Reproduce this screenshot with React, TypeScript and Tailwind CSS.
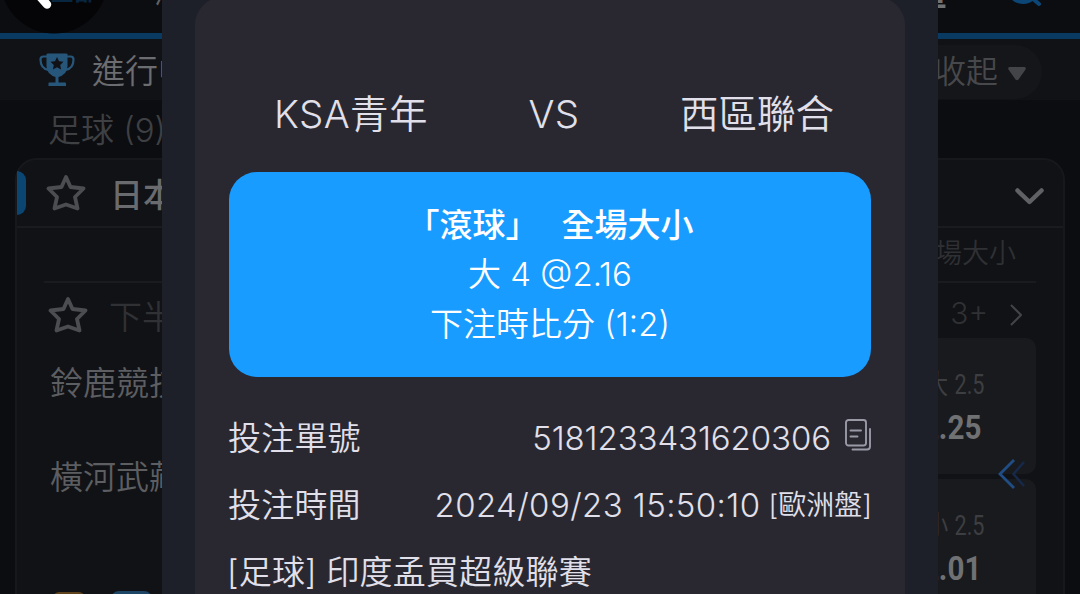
import React from 'react';

interface DetailRowProps {
  label: string;
  children: React.ReactNode;
}

interface OddsBoxProps {
  side: string;
  line: string;
  value: string;
}

const StarIcon: React.FC = () => (
  <svg
    className="h-10 w-10 shrink-0 text-[#4c4d50]"
    viewBox="0 0 40 40"
    fill="none"
    stroke="currentColor"
    strokeWidth="3.8"
    strokeLinejoin="round"
  >
    <path d="M20 4 L24.5 14 L37.5 15.5 L29 24 L31.5 35.5 L20 31.5 L8.5 35.5 L11 24 L2.5 15.5 L15.5 14 Z" />
  </svg>
);

const TrophyIcon: React.FC = () => (
  <svg className="h-[34px] w-9 shrink-0" viewBox="0 0 36 34" fill="none">
    <path
      d="M9 3.5H4.5Q1.5 3.5 1.5 6.5Q1.5 15.5 9.5 17M27 3.5h4.5Q34.5 3.5 34.5 6.5Q34.5 15.5 26.5 17"
      stroke="#27567b"
      strokeWidth="2.2"
    />
    <path d="M7.5 1.5Q7.5 .5 9 .5H27Q28.5 .5 28.5 1.5V13Q28.5 22 18 24.5Q7.5 22 7.5 13Z" fill="#27567b" />
    <path d="M16.5 21h3v9h-3zM10 29.5h16a1 1 0 0 1 1 1v2.5H9.5v-2.5q0-1 .5-1z" fill="#27567b" />
    <path
      d="M18 4l2 4.3 4.5.5-3.3 3.2.9 4.5-4.1-2.2-4.1 2.2.9-4.5-3.3-3.2 4.5-.5z"
      fill="#111216"
    />
  </svg>
);

const CopyIcon: React.FC = () => (
  <svg
    className="h-8 w-[26px] shrink-0"
    viewBox="0 0 26 32"
    fill="none"
    stroke="#9a99a6"
    strokeWidth="1.9"
    strokeLinecap="round"
  >
    <rect x="1" y="1" width="20" height="25.5" rx="2.5" />
    <path d="M5.5 11.5h10.5M5.5 17.5h7M25 10v17.5q0 3-3 3H7.5" />
  </svg>
);

const OddsBox: React.FC<OddsBoxProps> = ({ side, line, value }) => (
  <div className="flex h-[136px] w-[170px] flex-col items-end rounded-[10px] bg-[#191a1d] pt-[31px] pr-[52px]">
    <div className="flex origin-right scale-x-[0.8] gap-2 font-[Roboto,'Noto_Sans_CJK_TC',sans-serif] text-[27px] leading-8 font-normal text-[#3d3e41]">
      <span>{side}</span>
      <span>{line}</span>
    </div>
    <span className="mt-2 mr-[3px] origin-right scale-x-[0.87] font-[Roboto,sans-serif] text-[34px] leading-9 font-bold text-[#707173]">
      {value}
    </span>
  </div>
);

const DetailRow: React.FC<DetailRowProps> = ({ label, children }) => (
  <div className="flex h-[67px] items-center justify-between">
    <span className="-ml-px tracking-[0.2px]">{label}</span>
    <div className="flex items-center">{children}</div>
  </div>
);

const MatchList: React.FC = () => (
  <div className="h-full overflow-hidden bg-[#0c0d11]">
    {/* Top navigation */}
    <div className="relative h-[39px] border-b-[6px] border-[#083a62]">
      <span className="absolute -top-[27px] left-[154px] text-[33px] leading-9 text-[#606164]">滾球</span>
      <span className="absolute -top-[21px] right-[133px] text-[33px] leading-9 font-bold text-[#707173]">注單</span>
      <svg className="absolute top-0 left-0 h-[34px] w-[110px]" viewBox="0 0 110 34">
        <circle cx="54" cy="-20" r="53.5" fill="#050507" />
      </svg>
      <span className="absolute -top-[26px] left-[50px] text-[24px] leading-9 font-bold text-[#08263f]">全部</span>
      <svg className="absolute top-0 left-[30px] h-3 w-6" viewBox="0 0 24 12" fill="none">
        <path d="M6 -8L17 4.5" stroke="#fff" strokeWidth="8.5" strokeLinecap="round" />
      </svg>
      <svg className="absolute top-0 right-[38px] h-2 w-9" viewBox="0 0 36 8" fill="none" stroke="#0c4677" strokeWidth="4">
        <circle cx="17" cy="-13" r="15" />
        <path d="M26 -2l7 6" strokeLinecap="round" />
      </svg>
    </div>

    {/* In-play bar */}
    <div className="flex h-[61px] items-center justify-between bg-[#111216] pr-[38px] pl-[39px]">
      <div className="flex items-center gap-[17px]">
        <TrophyIcon />
        <span className="mt-0.5 text-[33px] leading-9 text-[#6c6d70]">進行中</span>
      </div>
      <div className="mt-1 flex h-[54px] items-center gap-2.5 rounded-full bg-[#151619] pr-4 pl-8">
        <span className="text-[32px] leading-9 text-[#47484b]">收起</span>
        <svg className="mt-1 h-3.5 w-[18px]" viewBox="0 0 18 14">
          <path d="M1.5 0h15q2 .5 1 2.5L10.5 12.5q-1.5 1.5-3 0L.5 2.5Q-.5 .5 1.5 0z" fill="#434447" />
        </svg>
      </div>
    </div>
    <div className="h-[58px] pl-12 text-[33px] leading-[60px] text-[#3f4043]">足球 (9)</div>

    {/* League card */}
    <div className="relative mr-[15px] ml-[15px] h-[500px] rounded-t-[22px] border-2 border-[#17181c] bg-[#111216]">
      <div className="absolute top-[11px] left-0 h-11 w-[9px] rounded-r-[9px] bg-[#0b4571]" />
      <div className="flex h-[68px] items-center border-b-2 border-[#1a1b1f] pr-[19px] pl-[29px]">
        <StarIcon />
        <span className="ml-6 flex-1 pt-1 text-[33px] leading-9 font-medium text-[#6a6b6e]">日本</span>
        <svg className="mt-1.5 h-[17px] w-[29px]" viewBox="0 0 29 17" fill="none" stroke="#606164" strokeWidth="4.5">
          <path d="M2.5 2.5L14.5 14L26.5 2.5" strokeLinecap="round" strokeLinejoin="round" />
        </svg>
      </div>
      <div className="mx-[27px] flex h-[55px] items-center justify-end border-b-2 border-[#1a1b1f] pr-5 text-[27px] text-[#2f3033]">
        全場大小
      </div>
      <div className="flex h-[55px] items-center pt-2 pr-[41px] pl-[31px] text-[#303134]">
        <StarIcon />
        <span className="ml-[21px] flex-1 pt-1 text-[33px] leading-9">下半場</span>
        <span className="mb-1 text-[30px] leading-9">3+</span>
        <svg className="ml-[22px] h-[22px] w-3" viewBox="0 0 12 22" fill="none" stroke="#434447" strokeWidth="2">
          <path d="M1 1L11 11L1 21" />
        </svg>
      </div>
      <div className="flex justify-between pr-[27px] pl-[33px]">
        <div className="pt-[27px] text-[33px] leading-9 text-[#5d5e61]">
          <div>鈴鹿競技</div>
          <div className="mt-[58px]">橫河武藏</div>
          <div className="mt-[96px] ml-[3px] flex gap-[26px]">
            <div className="mt-px h-8 w-8 rounded-md bg-[#5e431d]" />
            <div className="h-8 w-[41px] rounded-lg border-[3px] border-[#1d4566] bg-[#17283a]" />
          </div>
        </div>
        <div className="flex flex-col gap-[5px]">
          <OddsBox side="大" line="2.5" value="2.25" />
          <OddsBox side="小" line="2.5" value="2.01" />
        </div>
      </div>
      <svg className="absolute top-[299px] right-[37px] h-[30px] w-7" viewBox="0 0 28 30" fill="none">
        <path d="M26 3L15.5 15L26 27" stroke="#17294a" strokeWidth="2.5" />
        <path d="M16 1L2 15L16 29" stroke="#204d86" strokeWidth="2.8" />
      </svg>
    </div>
  </div>
);

const BetSlip: React.FC = () => (
  <div className="absolute inset-y-0 left-[162px] w-[776px] overflow-hidden bg-[#1e2029] px-[33px] text-[#e1e0ea]">
    <div className="-mt-[3px] h-[640px] rounded-t-[28px] bg-[#292831] px-[34px] pt-[88px]">
      <div className="flex h-[60px] items-center justify-between pr-[37px] pl-[45px] text-[38.5px]">
        <span className="tracking-[0.4px]">KSA青年</span>
        <span className="tracking-[0.4px]">VS</span>
        <span>西區聯合</span>
      </div>

      {/* Selected bet */}
      <div className="mt-[27px] flex h-[205px] flex-col items-center rounded-[28px] bg-[#189cff] pt-[27px] text-[33px] leading-[50px] text-white">
        <div className="relative top-px flex gap-6 font-medium">
          <span>「滾球」</span>
          <span className="-ml-px">全場大小</span>
        </div>
        <div>大 4 @2.16</div>
        <div>下注時比分 (1:2)</div>
      </div>

      {/* Ticket details */}
      <div className="mt-[27px] text-[33px] leading-[50px]">
        <DetailRow label="投注單號">
          <span className="tracking-[-0.1px]">5181233431620306</span>
          <span className="mb-1.5 ml-3.5">
            <CopyIcon />
          </span>
        </DetailRow>
        <DetailRow label="投注時間">
          <span className="tracking-[0.4px]">2024/09/23 15:50:10</span>
          <span className="ml-2 -mr-px text-[28px]">[歐洲盤]</span>
        </DetailRow>
        <div className="-ml-0.5 flex h-[67px] items-center tracking-[0.2px]">[足球] 印度孟買超級聯賽</div>
      </div>
    </div>
  </div>
);

const App: React.FC = () => {
  return (
    <div className="relative h-[594px] w-[1080px] overflow-hidden font-[Inter,'Noto_Sans_CJK_TC',sans-serif] font-[350] whitespace-nowrap">
      <MatchList />
      <BetSlip />
    </div>
  );
};

export default App;
